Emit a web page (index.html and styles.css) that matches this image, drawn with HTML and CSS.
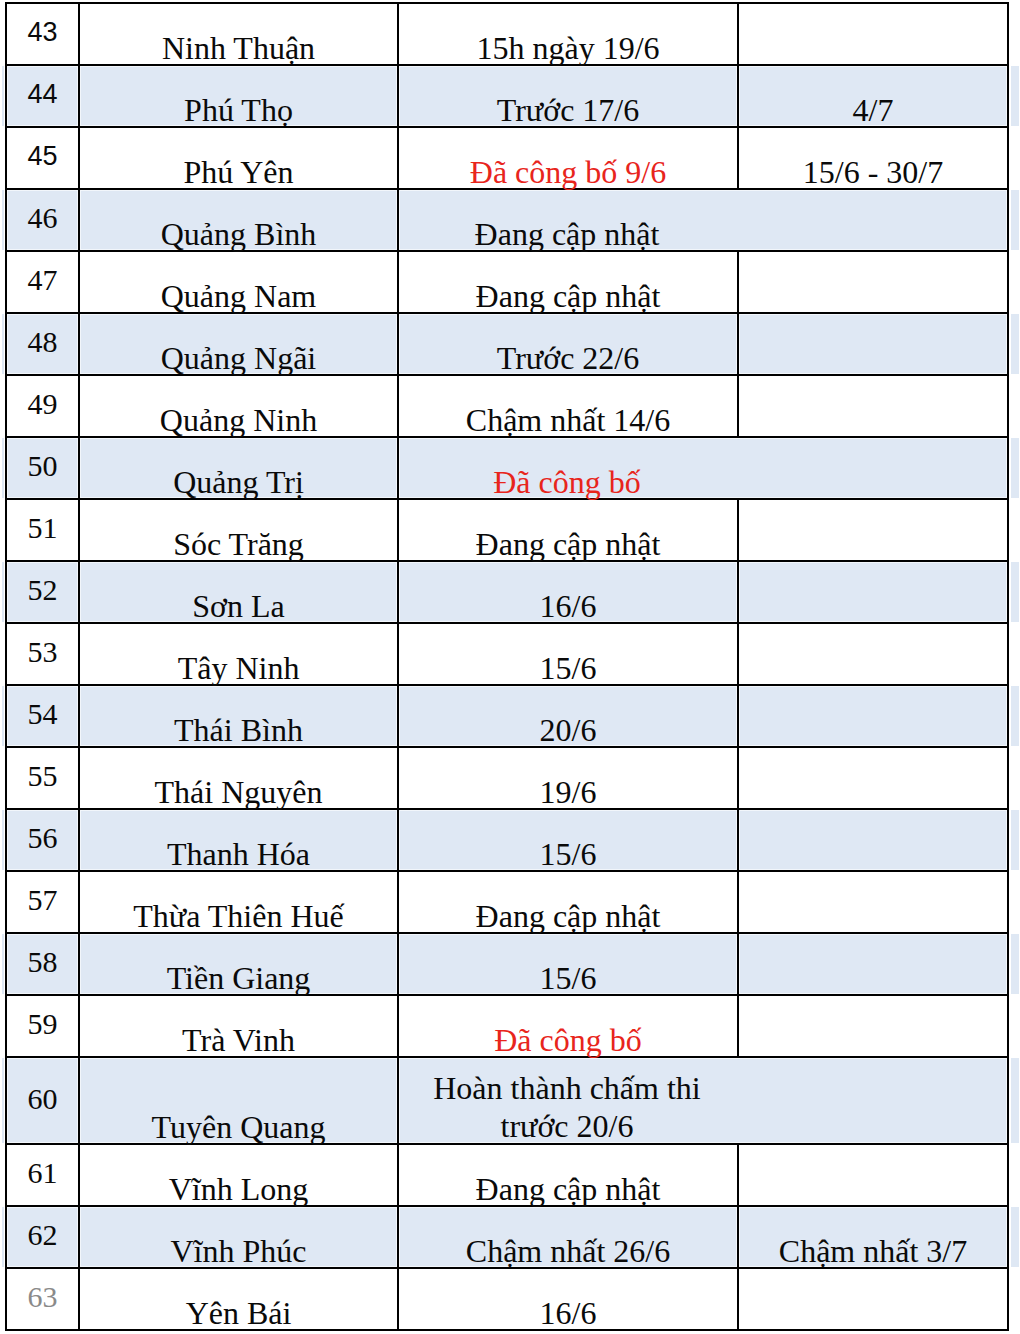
FILE: index.html
```html
<!DOCTYPE html>
<html lang="vi">
<head>
<meta charset="utf-8">
<title>Lịch công bố điểm thi</title>
<link rel="stylesheet" href="styles.css">
</head>
<body>
<table class="sheet">
  <colgroup>
    <col class="w-pad-l"><col class="w-no"><col class="w-name"><col class="w-date"><col class="w-extra"><col class="w-pad-r">
  </colgroup>
  <tbody>
    <tr><td class="pad"></td><td class="no sans">43</td><td class="name">Ninh Thuận</td><td class="date">15h ngày 19/6</td><td class="extra"></td><td class="pad"></td></tr>
    <tr class="alt"><td class="pad"></td><td class="no sans">44</td><td class="name">Phú Thọ</td><td class="date">Trước 17/6</td><td class="extra">4/7</td><td class="pad"></td></tr>
    <tr><td class="pad"></td><td class="no sans">45</td><td class="name">Phú Yên</td><td class="date red">Đã công bố 9/6</td><td class="extra">15/6 - 30/7</td><td class="pad"></td></tr>
    <tr class="alt"><td class="pad"></td><td class="no">46</td><td class="name">Quảng Bình</td><td class="date merged" colspan="2">Đang cập nhật</td><td class="pad"></td></tr>
    <tr><td class="pad"></td><td class="no">47</td><td class="name">Quảng Nam</td><td class="date">Đang cập nhật</td><td class="extra"></td><td class="pad"></td></tr>
    <tr class="alt"><td class="pad"></td><td class="no">48</td><td class="name">Quảng Ngãi</td><td class="date">Trước 22/6</td><td class="extra"></td><td class="pad"></td></tr>
    <tr><td class="pad"></td><td class="no">49</td><td class="name">Quảng Ninh</td><td class="date">Chậm nhất 14/6</td><td class="extra"></td><td class="pad"></td></tr>
    <tr class="alt"><td class="pad"></td><td class="no">50</td><td class="name">Quảng Trị</td><td class="date merged red" colspan="2">Đã công bố</td><td class="pad"></td></tr>
    <tr><td class="pad"></td><td class="no">51</td><td class="name">Sóc Trăng</td><td class="date">Đang cập nhật</td><td class="extra"></td><td class="pad"></td></tr>
    <tr class="alt"><td class="pad"></td><td class="no">52</td><td class="name">Sơn La</td><td class="date">16/6</td><td class="extra"></td><td class="pad"></td></tr>
    <tr><td class="pad"></td><td class="no">53</td><td class="name">Tây Ninh</td><td class="date">15/6</td><td class="extra"></td><td class="pad"></td></tr>
    <tr class="alt"><td class="pad"></td><td class="no">54</td><td class="name">Thái Bình</td><td class="date">20/6</td><td class="extra"></td><td class="pad"></td></tr>
    <tr><td class="pad"></td><td class="no">55</td><td class="name">Thái Nguyên</td><td class="date">19/6</td><td class="extra"></td><td class="pad"></td></tr>
    <tr class="alt"><td class="pad"></td><td class="no">56</td><td class="name">Thanh Hóa</td><td class="date">15/6</td><td class="extra"></td><td class="pad"></td></tr>
    <tr><td class="pad"></td><td class="no">57</td><td class="name">Thừa Thiên Huế</td><td class="date">Đang cập nhật</td><td class="extra"></td><td class="pad"></td></tr>
    <tr class="alt"><td class="pad"></td><td class="no">58</td><td class="name">Tiền Giang</td><td class="date">15/6</td><td class="extra"></td><td class="pad"></td></tr>
    <tr><td class="pad"></td><td class="no">59</td><td class="name">Trà Vinh</td><td class="date red">Đã công bố</td><td class="extra"></td><td class="pad"></td></tr>
    <tr class="alt tall"><td class="pad"></td><td class="no">60</td><td class="name">Tuyên Quang</td><td class="date merged two" colspan="2"><div class="two-lines">Hoàn thành chấm thi<br>trước 20/6</div></td><td class="pad"></td></tr>
    <tr><td class="pad"></td><td class="no">61</td><td class="name">Vĩnh Long</td><td class="date">Đang cập nhật</td><td class="extra"></td><td class="pad"></td></tr>
    <tr class="alt"><td class="pad"></td><td class="no">62</td><td class="name">Vĩnh Phúc</td><td class="date">Chậm nhất 26/6</td><td class="extra">Chậm nhất 3/7</td><td class="pad"></td></tr>
    <tr><td class="pad"></td><td class="no faded">63</td><td class="name">Yên Bái</td><td class="date">16/6</td><td class="extra"></td><td class="pad"></td></tr>
  </tbody>
</table>
</body>
</html>
```
FILE: styles.css
```css
html, body {
  margin: 0;
  padding: 0;
  background: #ffffff;
}

body {
  font-family: "Liberation Serif", "Times New Roman", serif;
  color: #0a0a0a;
  overflow: hidden;
}

.sheet {
  width: 1020px;
  margin-top: 2px;
  border-collapse: collapse;
  table-layout: fixed;
}

.w-pad-l { width: 6px; }
.w-no { width: 73px; }
.w-name { width: 319px; }
.w-date { width: 340px; }
.w-extra { width: 270px; }
.w-pad-r { width: 12px; }

.sheet tr {
  height: 62px;
}

.sheet tr.tall {
  height: 87px;
}

.sheet td {
  padding: 0;
  border: 2px solid #000;
  font-size: 32px;
  line-height: 32px;
  text-align: center;
  vertical-align: bottom;
  white-space: nowrap;
}

.sheet td.pad {
  border: none;
}

.alt td {
  background: #dfe8f4;
  box-shadow: inset 0 0 0 1px #f2f6fb;
}

.alt td.pad {
  box-shadow: inset 2px 1px 0 0 #fff, inset -1px -1px 0 0 #fff;
}

.sheet td.no {
  font-size: 30px;
  vertical-align: middle;
  line-height: 30px;
  padding-bottom: 4px;
}

.sheet td.no.sans {
  font-family: "Liberation Sans", Arial, sans-serif;
  font-size: 27px;
}

.sheet td.faded {
  color: #8a8a8a;
}

.red {
  color: #e8251c;
}

.sheet td.merged {
  padding-right: 272px;
}

.two-lines {
  line-height: 38px;
  margin-bottom: -2px;
}
```
